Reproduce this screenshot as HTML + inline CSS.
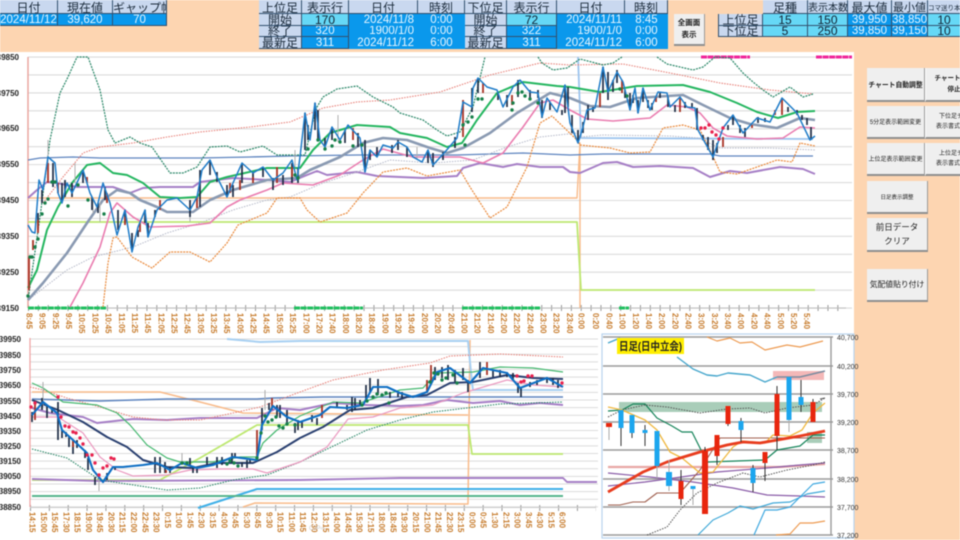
<!DOCTYPE html>
<html lang="ja"><head><meta charset="utf-8"><title>チャート</title>
<style>
html,body{margin:0;padding:0;width:960px;height:540px;overflow:hidden;background:#fff}
body{position:relative;font-family:"Liberation Sans","Noto Sans CJK JP",sans-serif;filter:blur(.5px)}
#peach1{position:absolute;left:0;top:0;width:960px;height:52px;background:#fdd5b1}
#peach2{position:absolute;left:854px;top:0;width:106px;height:540px;background:#fdd5b1}
.c{position:absolute;box-sizing:border-box;text-align:center;white-space:nowrap;overflow:hidden;color:#1a2a3a;font-size:12px;line-height:12px;border-right:1px solid #33506e;border-bottom:1px solid #33506e}
.h{background:#c9d8ef}
.t{line-height:17px}
.r{line-height:10px}
.b{background:#0a98ec;color:#e8f6ff;font-size:11.5px}
.n{background:#66d8f6;color:#123}
.btn{position:absolute;box-sizing:border-box;background:#efefef;border-right:1px solid #9a9a9a;border-bottom:2px solid #8f8f8f;display:flex;align-items:center;justify-content:center;text-align:center;color:#222;overflow:hidden;white-space:nowrap}
svg{position:absolute;left:0;top:0}
.xl text{writing-mode:vertical-rl;font:bold 8px "Liberation Sans",sans-serif;fill:#c67a2a}
.yl text{font:bold 8px "Liberation Sans",sans-serif;fill:#222;text-anchor:end}
.rl text{font:7px "Liberation Sans",sans-serif;fill:#333}
polyline,path{fill:none;stroke-linejoin:round}
</style></head><body>
<div id="peach1"></div><div id="peach2"></div>

<!-- table 1 -->
<div class="c h t" style="left:0;top:0;width:58px;height:14px">日付</div>
<div class="c h t" style="left:58px;top:0;width:55px;height:14px">現在値</div>
<div class="c h t" style="left:113px;top:0;width:54px;height:14px">ギャップ幅</div>
<div class="c b" style="left:0;top:14px;width:58px;height:12px">2024/11/12</div>
<div class="c b" style="left:58px;top:14px;width:55px;height:12px">39,620</div>
<div class="c b" style="left:113px;top:14px;width:54px;height:12px">70</div>

<!-- table 2 -->
<div class="c h t" style="left:259px;top:0;width:43px;height:14px">上位足</div>
<div class="c h t" style="left:302px;top:0;width:47px;height:14px">表示行</div>
<div class="c h t" style="left:349px;top:0;width:69px;height:14px">日付</div>
<div class="c h t" style="left:418px;top:0;width:47px;height:14px">時刻</div>
<div class="c h" style="left:259px;top:14px;width:43px;height:12px">開始</div>
<div class="c h r" style="left:259px;top:26px;width:43px;height:11px">終了</div>
<div class="c h" style="left:259px;top:37px;width:43px;height:12px">最新足</div>
<div class="c n" style="left:302px;top:14px;width:47px;height:12px">170</div>
<div class="c b r" style="left:302px;top:26px;width:47px;height:11px">320</div>
<div class="c b" style="left:302px;top:37px;width:47px;height:12px">311</div>
<div class="c b" style="left:349px;top:14px;width:69px;height:12px;border:0;text-align:right;padding-right:4px">2024/11/8</div>
<div class="c b r" style="left:349px;top:26px;width:69px;height:11px;border:0;text-align:right;padding-right:4px">1900/1/0</div>
<div class="c b" style="left:349px;top:37px;width:69px;height:12px;border:0;text-align:right;padding-right:4px">2024/11/12</div>
<div class="c b" style="left:418px;top:14px;width:47px;height:12px;border:0">0:00</div>
<div class="c b r" style="left:418px;top:26px;width:47px;height:11px;border:0">0:00</div>
<div class="c b" style="left:418px;top:37px;width:47px;height:12px;border:0">6:00</div>

<!-- table 3 -->
<div class="c h t" style="left:465px;top:0;width:42px;height:14px">下位足</div>
<div class="c h t" style="left:507px;top:0;width:50px;height:14px">表示行</div>
<div class="c h t" style="left:557px;top:0;width:68px;height:14px">日付</div>
<div class="c h t" style="left:625px;top:0;width:43px;height:14px">時刻</div>
<div class="c h" style="left:465px;top:14px;width:42px;height:12px">開始</div>
<div class="c h r" style="left:465px;top:26px;width:42px;height:11px">終了</div>
<div class="c h" style="left:465px;top:37px;width:42px;height:12px">最新足</div>
<div class="c n" style="left:507px;top:14px;width:50px;height:12px">72</div>
<div class="c b r" style="left:507px;top:26px;width:50px;height:11px">322</div>
<div class="c b" style="left:507px;top:37px;width:50px;height:12px">311</div>
<div class="c b" style="left:557px;top:14px;width:68px;height:12px;border:0;text-align:right;padding-right:3px">2024/11/11</div>
<div class="c b r" style="left:557px;top:26px;width:68px;height:11px;border:0;text-align:right;padding-right:3px">1900/1/0</div>
<div class="c b" style="left:557px;top:37px;width:68px;height:12px;border:0;text-align:right;padding-right:3px">2024/11/12</div>
<div class="c b" style="left:625px;top:14px;width:43px;height:12px;border:0">8:45</div>
<div class="c b r" style="left:625px;top:26px;width:43px;height:11px;border:0">0:00</div>
<div class="c b" style="left:625px;top:37px;width:43px;height:12px;border:0">6:00</div>

<div class="btn" style="left:674px;top:14px;width:31px;height:32px;font-size:7.5px;line-height:12px;font-weight:bold">全画面<br>表示</div>

<!-- table 4 -->
<div class="c h t" style="left:763px;top:0;width:45px;height:14px">足種</div>
<div class="c h t" style="left:808px;top:0;width:40px;height:14px;font-size:10px">表示本数</div>
<div class="c h t" style="left:848px;top:0;width:44px;height:14px">最大値</div>
<div class="c h t" style="left:892px;top:0;width:36px;height:14px;font-size:11px">最小値</div>
<div class="c h t" style="left:928px;top:0;width:32px;height:14px;font-size:6.5px;border-right:0">コマ送り本</div>
<div class="c h" style="left:718px;top:14px;width:45px;height:12px;border-left:1px solid #33506e">上位足</div>
<div class="c h r" style="left:718px;top:26px;width:45px;height:11px;border-left:1px solid #33506e">下位足</div>
<div class="c n" style="left:763px;top:14px;width:45px;height:12px">15</div>
<div class="c n r" style="left:763px;top:26px;width:45px;height:11px">5</div>
<div class="c n" style="left:808px;top:14px;width:40px;height:12px">150</div>
<div class="c n r" style="left:808px;top:26px;width:40px;height:11px">250</div>
<div class="c b" style="left:848px;top:14px;width:44px;height:12px">39,950</div>
<div class="c b r" style="left:848px;top:26px;width:44px;height:11px">39,850</div>
<div class="c b" style="left:892px;top:14px;width:36px;height:12px">38,850</div>
<div class="c b r" style="left:892px;top:26px;width:36px;height:11px">39,150</div>
<div class="c n" style="left:928px;top:14px;width:32px;height:12px;border-right:0">10</div>
<div class="c n r" style="left:928px;top:26px;width:32px;height:11px;border-right:0">10</div>

<svg width="960" height="540" viewBox="0 0 960 540">
<!-- TOP CHART grid -->
<line x1="440" y1="56.5" x2="440" y2="309" stroke="#dcdcdc" stroke-width="824" stroke-dasharray="1.1 16.83"/>
<line x1="28" y1="308" x2="846" y2="308" stroke="#999" stroke-width="6" stroke-dasharray="1 8.87"/>
<line x1="28" y1="308" x2="846" y2="308" stroke="#bbb" stroke-width="1"/>
<line x1="28" y1="57" x2="28" y2="308" stroke="#e8a09a" stroke-width="1.4"/>
<g stroke="#21c060" stroke-width="3" stroke-dasharray="6 .6"><path d="M28 308H106M294 308H363M462 308H540M619 308H629"/></g>
<g stroke="#f0249a" stroke-width="3" stroke-dasharray="6 .6"><path d="M701 57H750M816 57H852"/></g>

<!-- top lines -->
<polyline stroke="#9cc4ee" stroke-width="1.8" points="578,57 581,138 813,139"/>
<polyline stroke="#f9bb8a" stroke-width="1.4" points="28,198 577,198 580,143 580,308"/>
<polyline stroke="#bde870" stroke-width="1.8" points="28,222 577,222 581,290 815,290"/>
<polyline stroke="#5d84bf" stroke-width="1.3" points="28,160 40,158 73,157 100,158 200,158 250,157 290,156 357,155 457,155 523,153 570,155 603,154 657,154 710,154 720,156 813,156"/>
<polyline stroke="#a67fc6" stroke-width="2" points="28,198 37,190 47,182 57,183 77,187 90,187 113,187 130,193 143,188 160,187 193,187 200,182 233,178 267,180 290,182 307,175 317,171 327,175 357,172 377,176 400,177 423,178 457,176 463,168 480,163 503,167 517,164 540,167 563,167 570,172 580,173 603,163 617,162 633,167 660,166 693,168 710,177 730,171 747,173 780,167 803,169 815,174"/>
<polyline stroke="#b5b9c9" stroke-width="1" stroke-dasharray="1.5 1.2" points="28,300 67,270 93,257 133,247 167,233 200,223 233,210 267,200 290,197 323,183 357,172 390,160 433,163 473,160 507,147 540,137 577,133 580,137 603,135 670,136 698,138 720,148 770,148 815,150"/>
<polyline stroke="#ea8a3c" stroke-width="1.2" stroke-dasharray="2 1" points="103,307 108,263 113,238 117,237 132,257 152,268 170,252 190,252 210,262 227,243 238,225 267,213 277,198 300,198 307,210 320,222 347,213 363,193 383,172 407,168 427,176 460,170 470,187 490,218 507,207 527,167 540,123 552,116 577,140 580,145 610,148 630,153 650,152 663,128 683,125 700,130 710,150 720,172 737,174 777,160 792,162 800,143 815,146"/>
<polyline stroke="#ea7db0" stroke-width="1.6" points="70,307 83,283 100,247 110,213 117,203 133,217 150,227 187,226 210,223 227,207 240,200 267,190 283,183 313,185 340,175 363,160 383,149 413,157 440,157 460,157 483,163 503,153 523,127 540,103 553,100 570,110 587,119 613,121 650,118 667,105 687,107 700,113 713,128 727,136 757,139 783,138 800,127 815,128"/>
<polyline stroke="#e8827a" stroke-width="1.1" stroke-dasharray="1.5 1.2" points="43,203 63,177 83,153 100,147 133,143 167,137 200,132 250,127 290,122 323,108 357,102 390,100 440,92 490,75 540,63 570,65 623,64 670,73 720,83 770,90 813,94"/>
<polyline stroke="#2a8768" stroke-width="1.2" stroke-dasharray="2 1" points="28,300 40,217 50,140 60,93 68,77 77,57 88,57 100,90 108,130 115,143 130,137 140,143 152,147 170,173 183,173 197,167 210,147 227,146 240,152 263,146 277,155 305,155 312,125 317,107 323,97 337,89 357,86 373,97 393,107 400,113 423,120 437,130 447,136 460,132 473,107 485,57"/>
<polyline stroke="#2a8768" stroke-width="1.2" stroke-dasharray="2 1" points="538,57 542,63 553,70 567,68 580,59 603,65 613,63 622,57"/>
<polyline stroke="#2a8768" stroke-width="1.2" stroke-dasharray="2 1" points="657,57 667,64 693,70 703,67 715,57 730,58 743,73 753,82 763,90 773,97 790,87 803,97 813,94"/>
<polyline stroke="#8a9ab2" stroke-width="2.6" points="28,300 43,283 67,253 87,223 103,200 117,190 130,193 140,200 157,207 167,212 193,212 210,200 233,190 267,180 297,178 310,170 340,157 363,143 383,138 407,140 430,148 447,153 463,148 490,133 517,113 550,93 570,98 590,106 610,107 637,98 683,95 703,105 730,118 750,124 777,128 800,118 815,120"/>
<polyline stroke="#25b660" stroke-width="2" points="28,288 37,270 47,230 58,207 72,183 87,165 100,163 113,173 127,175 143,183 160,197 180,198 197,197 210,182 227,177 267,168 300,168 313,150 330,133 357,125 390,127 400,133 427,138 447,147 462,143 477,120 497,93 523,82 557,86 570,87 600,92 637,86 683,85 710,92 737,103 757,112 778,118 797,112 815,111"/>

<!-- top candles -->
<path stroke="#b0b0b0" stroke-width="1" d="M48 140V163M75 163V183M93 200V213M100 202V222M190 213V222M295 150V167M338 115V142M417 147V160"/>
<path stroke="#1d2c44" stroke-width="1.7" d="M38 213V230M42 190V203M53 163V187M62 183V200M65 180V197M72 183V197M83 170V183M92 197V210M98 203V213M105 187V200M118 210V230M125 213V223M132 233V250M138 230V237M145 210V223M148 223V237M155 210V217M190 200V217M200 170V207M210 160V175M217 172V182M227 185V197M233 185V197M242 163V183M253 172V180M263 167V177M273 178V190M283 175V185M292 163V183M298 168V183M305 113V150M308 125V140M315 103V130M318 110V140M325 138V147M332 127V140M345 130V143M358 133V147M365 140V172M370 150V160M377 147V157M392 145V153M398 140V150M407 147V157M428 150V163M433 153V167M443 152V160M455 137V148M472 88V112M478 78V93M498 92V100M507 95V107M518 80V97M530 90V98M538 90V98M542 100V118M550 102V110M562 110V115M565 85V113M568 87V107M572 115V133M578 130V143M583 122V133M588 105V120M593 107V112M603 67V93M608 72V100M613 80V92M617 70V83M625 90V98M630 93V110M633 95V103M638 100V113M643 88V102M648 100V108M652 103V110M660 93V98M668 97V107M675 105V112M685 102V108M692 103V108M697 108V130M703 135V140M708 137V150M713 140V160M717 143V153M728 125V130M733 115V125M740 125V133M745 128V137M758 117V123M765 118V122M788 107V112M797 110V115M802 115V120M807 118V125M811 127V140"/>
<path stroke="#a83224" stroke-width="1.8" d="M29 257V290M33 240V250M38 220V233M48 163V183M58 183V193M87 177V183M107 193V203M125 217V225M140 223V232M160 200V210M197 197V208M230 183V193M240 180V190M253 177V183M277 167V183M292 167V177M353 128V140M463 100V137M483 83V93M512 95V105M600 93V107M622 80V93M656 97V102M680 97V112M723 137V147M752 125V128M775 110V115M782 98V115"/>
<polyline stroke="#1f7cc8" stroke-width="1.5" points="28,225 32,232 35,233 39,180 43,190 48,157 55,163 58,193 62,203 67,183 72,193 83,170 90,193 97,207 103,183 110,203 117,235 125,210 132,252 138,227 145,210 148,237 157,210 167,200 177,198 190,210 197,197 202,170 210,160 217,177 227,197 233,183 242,163 253,173 263,167 273,180 283,173 292,160 297,180 300,157 305,113 310,140 315,103 320,140 325,147 332,127 340,140 348,125 360,138 365,172 370,150 377,157 383,145 393,148 398,142 407,147 413,157 422,162 428,150 433,165 445,152 457,138 463,102 472,107 473,88 478,78 487,87 497,90 503,107 513,87 520,80 530,92 538,93 542,117 547,98 557,112 565,85 570,123 578,143 583,127 587,110 595,108 603,67 608,92 617,72 623,82 630,110 635,88 638,113 643,88 650,110 658,92 667,93 670,107 680,97 687,107 695,108 698,130 713,157 723,128 733,115 743,133 757,118 770,122 782,98 797,113 810,140 815,136"/>
<path stroke="#17804a" stroke-width="3.4" stroke-linecap="round" d="M28 296h0M30 257h0M32 257h0M35 247h0M38 239h0M42 214h0M45 203h0M48 199h0M52 182h0M55 182h0M68 206h0M78 185h0M88 200h0M104 214h0M295 175h0M298 178h0M308 149h0M318 140h0M325 149h0M332 146h0M335 140h0M340 142h0M353 146h0M362 145h0M463 125h0M465 145h0M468 122h0M472 117h0M478 99h0M482 99h0M512 110h0M513 103h0M518 93h0M522 92h0M525 96h0M530 99h0M538 103h0M620 89h0M627 96h0"/>
<path stroke="#e8224e" stroke-width="3.4" stroke-linecap="round" d="M701 128h0M705 128h0M709 125h0M712 132h0M716 135h0M719 139h0M723 128h0"/>

<!-- Y labels top -->
<g class="yl"><text x="19" y="60">39850</text><text x="19" y="96">39750</text><text x="19" y="131">39650</text><text x="19" y="167">39550</text><text x="19" y="203">39450</text><text x="19" y="239">39350</text><text x="19" y="275">39250</text><text x="19" y="311">39150</text></g>

<!-- X labels top -->
<g class="xl"><text x="29" y="313">8:45</text><text x="42.2" y="313">9:05</text><text x="55.4" y="313">9:25</text><text x="68.5" y="313">9:45</text><text x="81.7" y="313">10:05</text><text x="94.9" y="313">10:25</text><text x="108.1" y="313">10:45</text><text x="121.3" y="313">11:05</text><text x="134.4" y="313">11:25</text><text x="147.6" y="313">11:45</text><text x="160.8" y="313">12:05</text><text x="174" y="313">12:25</text><text x="187.2" y="313">12:45</text><text x="200.3" y="313">13:05</text><text x="213.5" y="313">13:25</text><text x="226.7" y="313">13:45</text><text x="239.9" y="313">14:05</text><text x="253.1" y="313">14:25</text><text x="266.2" y="313">14:45</text><text x="279.4" y="313">15:05</text><text x="292.6" y="313">15:25</text><text x="305.8" y="313">17:00</text><text x="319" y="313">17:20</text><text x="332.1" y="313">17:40</text><text x="345.3" y="313">18:00</text><text x="358.5" y="313">18:20</text><text x="371.7" y="313">18:40</text><text x="384.9" y="313">19:00</text><text x="398" y="313">19:20</text><text x="411.2" y="313">19:40</text><text x="424.4" y="313">20:00</text><text x="437.6" y="313">20:20</text><text x="450.8" y="313">20:40</text><text x="463.9" y="313">21:00</text><text x="477.1" y="313">21:20</text><text x="490.3" y="313">21:40</text><text x="503.5" y="313">22:00</text><text x="516.7" y="313">22:20</text><text x="529.8" y="313">22:40</text><text x="543" y="313">23:00</text><text x="556.2" y="313">23:20</text><text x="569.4" y="313">23:40</text><text x="581" y="313">0:00</text><text x="595.7" y="313">0:20</text><text x="608.9" y="313">0:40</text><text x="622.1" y="313">1:00</text><text x="635.3" y="313">1:20</text><text x="648.5" y="313">1:40</text><text x="661.6" y="313">2:00</text><text x="674.8" y="313">2:20</text><text x="688" y="313">2:40</text><text x="701.2" y="313">3:00</text><text x="714.4" y="313">3:20</text><text x="727.5" y="313">3:40</text><text x="740.7" y="313">4:00</text><text x="753.9" y="313">4:20</text><text x="767.1" y="313">4:40</text><text x="780.3" y="313">5:00</text><text x="793.4" y="313">5:20</text><text x="806.6" y="313">5:40</text></g>

<!-- LOWER LEFT CHART -->
<line x1="314" y1="338.5" x2="314" y2="508" stroke="#dcdcdc" stroke-width="568" stroke-dasharray="1 6.63"/>
<line x1="30" y1="508" x2="596" y2="508" stroke="#999" stroke-width="6" stroke-dasharray="1 17.86"/>
<line x1="30" y1="507.5" x2="596" y2="507.5" stroke="#ccc" stroke-width="1"/>
<line x1="30" y1="338" x2="30" y2="507" stroke="#f0a0a0" stroke-width="1.2"/>
<polyline stroke="#f9bb8a" stroke-width="1.5" points="32,392 160,392 200,402 243,413 468,415"/>
<polyline stroke="#f9bb8a" stroke-width="1.5" points="243,507 255,503 468,504 470,340"/>
<polyline stroke="#a8d0f2" stroke-width="2" points="227,339 260,342 300,341 468,341 472,383 473,390 563,390"/>
<polyline stroke="#bde870" stroke-width="1.8" points="32,480 160,480 200,458 257,425 468,425 472,454 563,454"/>
<polyline stroke="#5d84bf" stroke-width="1.4" points="32,399 100,401 167,399 257,399 273,398 323,397 467,397 563,397"/>
<polyline stroke="#a67fc6" stroke-width="2" points="32,408 50,413 83,417 97,423 133,419 167,420 200,418 257,418 277,408 300,410 333,403 367,405 400,406 423,405 447,400 473,403 500,401 520,405 540,403 563,405"/>
<polyline stroke="#a67fc6" stroke-width="1.9" points="32,479 100,481 300,480 400,478 563,478 567,482 597,482"/>
<polyline stroke="#3fb0e8" stroke-width="2" points="198,508 257,489 563,489"/>
<line x1="32" y1="496" x2="563" y2="496" stroke="#56b48c" stroke-width="2"/>
<polyline stroke="#e8827a" stroke-width="1.1" stroke-dasharray="1.5 1.2" points="30,387 43,390 67,398 100,407 133,417 163,420 200,420 233,413 260,407 300,392 333,380 383,370 430,363 450,356 500,354 563,357"/>
<polyline stroke="#46b870" stroke-width="1.2" points="32,383 43,388 63,402 97,405 117,413 130,425 147,445 167,458 180,462 213,462 240,457 257,457 263,443 277,430 300,416 333,402 360,403 400,390 423,388 437,373 473,372 500,367 533,368 563,372"/>
<polyline stroke="#2a8768" stroke-width="1.1" stroke-dasharray="1.5 1.2" points="32,449 67,458 100,480 167,490 200,488 233,480 267,475 300,462 367,430 400,420 433,412 467,408 500,404 563,402"/>
<polyline stroke="#eb9ac0" stroke-width="1.2" points="32,417 58,417 83,433 100,457 117,470 133,476 167,475 190,470 220,469 253,469 267,473 300,462 327,447 348,419 373,417 400,408 433,405 463,393 507,380 533,385 563,387"/>
<polyline stroke="#2a4070" stroke-width="2" points="32,400 58,410 83,422 107,437 127,447 143,460 167,467 193,468 217,463 253,463 277,452 300,438 323,427 350,410 373,408 407,397 427,395 450,383 473,382 507,375 533,378 563,379"/>
<path stroke="#aaa" stroke-width="1" d="M43 382V407M99 477V491M265 390V410M182 453V465"/>
<path stroke="#1d2c44" stroke-width="1.7" d="M32 412V422M42 398V410M47 405V418M52 407V413M58 402V440M62 430V438M66 432V437M69 437V447M73 440V454M77 440V448M85 450V458M88 458V470M95 477V485M103 480V483M107 473V480M115 467V470M155 457V473M160 457V473M165 462V473M170 467V473M190 458V465M193 467V473M197 467V473M207 457V467M217 457V468M222 457V465M232 453V463M235 453V458M242 462V467M247 460V468M250 460V463M262 408V430M269 403V410M277 405V417M280 405V418M287 410V423M295 423V433M298 420V430M302 422V428M312 415V422M317 418V425M337 402V408M347 405V410M352 397V412M355 398V410M360 400V405M366 385V402M370 378V392M378 379V395M390 392V398M398 392V397M402 392V398M435 367V380M442 367V378M448 365V380M455 370V382M463 368V380M468 380V392M480 362V378M493 370V377M500 370V377M507 372V377M513 373V380M518 383V393M521 388V397M530 382V387M537 380V385M547 377V383M553 378V385M558 380V388"/>
<path stroke="#a83224" stroke-width="1.8" d="M35 402V420M73 440V447M257 430V460M272 398V410M322 405V418M427 380V393M431 365V383M487 362V375M166 470V473"/>
<polyline stroke="#0f6fc4" stroke-width="2.1" points="32,415 43,402 57,413 62,430 73,440 87,453 93,470 103,482 113,467 123,467 143,465 157,463 170,470 182,463 197,468 213,465 233,457 257,460 262,425 273,406 287,417 300,422 320,415 330,407 347,408 363,405 373,387 387,387 400,393 413,397 427,392 437,372 450,368 470,383 483,368 507,373 520,388 547,378 563,387"/>
<path stroke="#e8224e" stroke-width="3.4" stroke-linecap="round" d="M31 407h0M35 403h0M58 397h0M61 417h0M65 426h0M69 427h0M73 432h0M76 433h0M80 438h0M83 444h0M87 455h0M92 455h0M95 463h0M99 475h0M103 468h0M107 466h0M111 458h0M114 459h0M517 376h0M521 382h0M524 381h0M528 376h0M532 376h0M562 383h0"/>
<path stroke="#17804a" stroke-width="3.4" stroke-linecap="round" d="M182 463h0M187 463h0M227 464h0M230 461h0M234 463h0M238 466h0M257 458h0M261 433h0M265 416h0M268 422h0M272 420h0M276 417h0M279 426h0M283 428h0M287 424h0M295 425h0M362 405h0M367 401h0M373 397h0M377 394h0M382 395h0M386 393h0M389 403h0M430 382h0M434 373h0M438 374h0M442 380h0M446 378h0M453 375h0M457 383h0"/>
<g class="yl"><text x="21" y="342">39950</text><text x="21" y="358">39850</text><text x="21" y="373">39750</text><text x="21" y="388">39650</text><text x="21" y="404">39550</text><text x="21" y="419">39450</text><text x="21" y="434">39350</text><text x="21" y="449">39250</text><text x="21" y="464">39150</text><text x="21" y="479">39050</text><text x="21" y="494">38950</text><text x="21" y="510">38850</text></g>
<g class="xl"><text x="32" y="512">14:15</text><text x="43.3" y="512">15:00</text><text x="54.6" y="512">15:45</text><text x="65.8" y="512">17:30</text><text x="77.1" y="512">18:15</text><text x="88.4" y="512">19:00</text><text x="99.7" y="512">19:45</text><text x="111" y="512">20:30</text><text x="122.2" y="512">21:15</text><text x="133.5" y="512">22:00</text><text x="144.8" y="512">22:45</text><text x="156.1" y="512">23:30</text><text x="167.4" y="512">0:15</text><text x="178.6" y="512">1:00</text><text x="189.9" y="512">1:45</text><text x="201.2" y="512">2:30</text><text x="212.5" y="512">3:15</text><text x="223.8" y="512">4:00</text><text x="235" y="512">4:45</text><text x="246.3" y="512">5:30</text><text x="257.6" y="512">8:45</text><text x="268.9" y="512">9:30</text><text x="280.2" y="512">10:15</text><text x="291.4" y="512">11:00</text><text x="302.7" y="512">11:45</text><text x="314" y="512">12:30</text><text x="325.3" y="512">13:15</text><text x="336.6" y="512">14:00</text><text x="347.8" y="512">14:45</text><text x="359.1" y="512">15:30</text><text x="370.4" y="512">17:15</text><text x="381.7" y="512">18:00</text><text x="393" y="512">18:45</text><text x="404.2" y="512">19:30</text><text x="415.5" y="512">20:15</text><text x="426.8" y="512">21:00</text><text x="438.1" y="512">21:45</text><text x="449.4" y="512">22:30</text><text x="460.6" y="512">23:15</text><text x="471.9" y="512">0:00</text><text x="483.2" y="512">0:45</text><text x="494.5" y="512">1:30</text><text x="505.8" y="512">2:15</text><text x="517" y="512">3:00</text><text x="528.3" y="512">3:45</text><text x="539.6" y="512">4:30</text><text x="550.9" y="512">5:15</text><text x="562.2" y="512">6:00</text></g>
<text x="309" y="530" font-size="6" fill="#ccc" font-family="Liberation Sans">CJP∞</text>

<!-- DAILY CHART -->
<rect x="602" y="334" width="252" height="204" fill="#fff" stroke="#b8d4ee" stroke-width="1.2"/>
<path stroke="#9a9a9a" stroke-width="1.4" d="M603 337H833M603 366H833M603 394H833M603 422H833M603 450H833M603 479H833M603 507H833M603 535H833M831 337V535"/>
<rect x="619" y="402" width="203" height="10" fill="#a9cdb9"/>
<rect x="807" y="432" width="15" height="11" fill="#a9cdb9"/>
<rect x="773" y="371" width="51" height="9" fill="#f4b8b8"/>
<polyline stroke="#ed9b52" stroke-width="1.2" points="707,337 717,341 730,338 740,343 752,342 765,350 787,345 800,347 823,341"/>
<polyline stroke="#46a6cc" stroke-width="1.4" points="608,343 620,338"/>
<polyline stroke="#46a6cc" stroke-width="1.4" points="677,357 693,369 707,375 717,376 728,373 750,375 765,382 777,377"/>
<polyline stroke="#7a8ca0" stroke-width="1.5" points="777,377 800,377 825,371"/>
<polyline stroke="#e8a8a4" stroke-width="2.2" points="608,467 700,467 780,467 825,464"/>
<polyline stroke="#8a5ca8" stroke-width="1.2" points="608,473 650,477 693,482 733,488 767,495 800,496 825,497"/>
<polyline stroke="#8a5ca8" stroke-width="1.2" points="608,486 645,482 667,479 717,472 767,468 800,465 825,463"/>
<polyline stroke="#a0604f" stroke-width="1.1" points="608,505 620,505 633,502 645,502 657,493 680,493 700,470 720,438 740,438 825,438"/>
<polyline stroke="#16845a" stroke-width="1.2" points="608,411 622,410 633,404 645,404 657,418 672,426 682,432 692,432 702,452 708,462 765,460 777,450 800,446 813,435 825,435"/>
<polyline stroke="#555" stroke-width="1" stroke-dasharray="1.5 1.2" points="608,417 622,410 645,405 667,407 700,413 727,409 750,408 765,413 787,408 813,405 825,398"/>
<polyline stroke="#555" stroke-width="1" stroke-dasharray="1.5 1.2" points="647,535 667,527 680,510 697,493 717,483 743,473 760,477 787,470 813,465 825,462"/>
<polyline stroke="#3fa8d8" stroke-width="1.2" points="698,535 713,520 728,513 740,506 753,509 773,503 790,502 807,494 825,491"/>
<polyline stroke="#3fa8e0" stroke-width="1.2" points="754,535 765,510 777,510 790,507 813,484 825,482"/>
<polyline stroke="#ed9b52" stroke-width="1.2" points="776,535 790,534 800,523 813,523 825,521"/>
<polyline stroke="#f0b840" stroke-width="1.3" points="608,407 622,410 645,420 657,430 670,452 682,458 700,473 713,472 733,447 742,441 765,443 773,435 790,436 802,430 813,413 825,403"/>
<polyline stroke="#e83c1e" stroke-width="2.8" points="608,492 643,472 667,462 700,452 727,445 743,442 760,443 800,436 825,431"/>
<!-- wicks -->
<path stroke="#aaa" stroke-width="1" d="M609 427V440M693 489V505M789 420V432M657 466V478M669 460V491"/>
<path stroke="#333" stroke-width="1" d="M621 428V446M632 433V438M645 425V446M681 470V505M705 447V451M717 456V465M728 424V426M741 418V442M753 465V492M765 452V481M777 386V450M801 380V412M813 399V402"/>
<!-- daily candles -->
<g fill="#e8260e"><rect x="606" y="423" width="6" height="4"/><rect x="678.5" y="481" width="5" height="18"/><rect x="702" y="451" width="6" height="63"/><rect x="714.5" y="435" width="5" height="21"/><rect x="725.5" y="406" width="5" height="18"/><rect x="762.5" y="452" width="5" height="11"/><rect x="774.5" y="394" width="5" height="42"/><rect x="810.5" y="402" width="5" height="20"/></g>
<g fill="#1ca6ee"><rect x="618.5" y="410" width="5" height="18"/><rect x="629.5" y="415" width="5" height="18"/><rect x="642.5" y="430" width="5" height="3"/><rect x="654.5" y="431" width="5" height="35"/><rect x="666" y="472" width="6" height="14"/><rect x="690.5" y="486" width="5" height="3"/><rect x="738.5" y="421" width="5" height="9"/><rect x="750.5" y="468" width="5" height="15"/><rect x="786.5" y="377" width="5" height="43"/><rect x="798.5" y="397" width="5" height="8"/></g>
<path stroke="#555" stroke-width="1" d="M820 399l5-1"/>
<rect x="617" y="338" width="67" height="16" fill="#ffee00"/>
<text x="619" y="350" textLength="63" lengthAdjust="spacingAndGlyphs" style="font:bold 11px 'Liberation Sans','Noto Sans CJK JP',sans-serif" fill="#222">日足(日中立会)</text>
<g class="rl"><text x="837" y="340">40,700</text><text x="837" y="369">40,200</text><text x="837" y="397">39,700</text><text x="837" y="425">39,200</text><text x="837" y="453">38,700</text><text x="837" y="482">38,200</text><text x="837" y="510">37,700</text><text x="837" y="538">37,200</text></g>
</svg>

<!-- right buttons -->
<div class="btn" style="left:867px;top:68px;width:58px;height:34px;font-size:6.8px;font-weight:bold">チャート自動調整</div>
<div class="btn" style="left:925px;top:68px;width:58px;height:34px;font-size:6.5px;line-height:11px;font-weight:bold;border-left:1px solid #fff">チャート自動<br>停止</div>
<div class="btn" style="left:867px;top:106px;width:58px;height:33px;font-size:6px">5分足表示範囲変更</div>
<div class="btn" style="left:925px;top:106px;width:58px;height:33px;font-size:6px;line-height:10px;border-left:1px solid #fff">下位足チャ<br>表示書式変更</div>
<div class="btn" style="left:867px;top:143px;width:58px;height:33px;font-size:6px">上位足表示範囲変更</div>
<div class="btn" style="left:925px;top:143px;width:58px;height:33px;font-size:6px;line-height:10px;border-left:1px solid #fff">上位足チャ<br>表示書式変更</div>
<div class="btn" style="left:867px;top:181px;width:61px;height:33px;font-size:5.5px">日足表示調整</div>
<div class="btn" style="left:867px;top:218px;width:61px;height:34px;font-size:8.5px;line-height:14px">前日データ<br>クリア</div>
<div class="btn" style="left:867px;top:269px;width:61px;height:33px;font-size:7.8px">気配値貼り付け</div>
</body></html>
